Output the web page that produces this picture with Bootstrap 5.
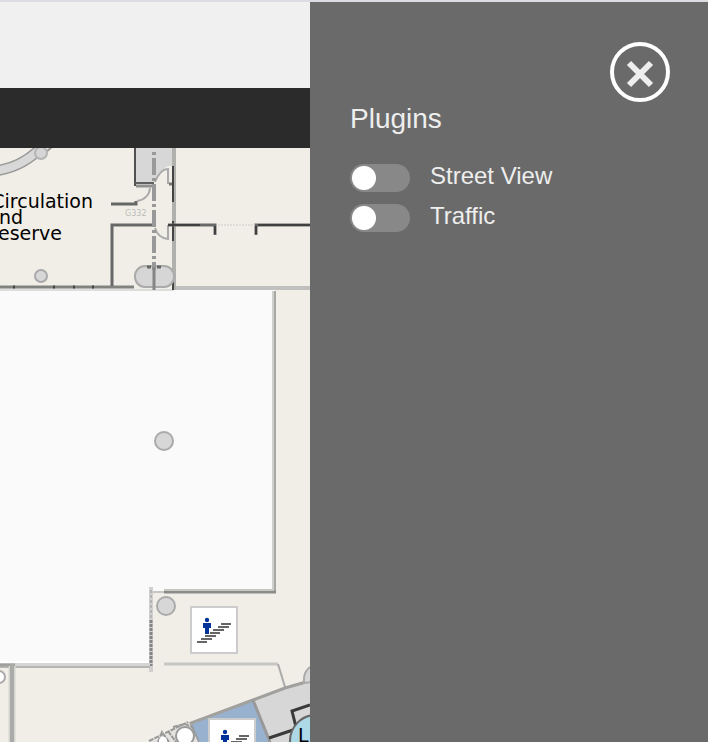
<!DOCTYPE html>
<html lang="en">
<head>
<meta charset="utf-8">
<meta name="viewport" content="width=device-width, initial-scale=1">
<title>Floor plan – Plugins</title>
<link href="https://cdn.jsdelivr.net/npm/bootstrap@5.3.0/dist/css/bootstrap.min.css" rel="stylesheet">
<style>
  body { font-family: "Liberation Sans", Arial, sans-serif; border-top: 2px solid #dcdce2; background: #f0f0f0; }
  .top-strip { height: 86px; background: #f0f0f0; }
  .tool-strip { height: 60px; background: #2b2b2b; }
  .floor-map { background: #f1eee7; min-height: 0; }
  .floor-map svg { font-family: "DejaVu Sans", Verdana, sans-serif; }
  .plugin-panel { width: 398px; padding: 40px 38px 40px 40px; background: #6a6a6a; color: #eee; }
  .close-round { width: 60px; height: 60px; border: 4px solid #fff; background: transparent; color: #eee; }
  .panel-title { font-size: 28px; line-height: 34px; font-weight: 400; margin-bottom: 22px; }
  .plugin-row { height: 40px; gap: 20px; padding: 0; }
  .plugin-row .form-check-input {
    width: 60px; height: 28px; margin: 6px 0 0; float: none; border: 0;
    background-color: #888; background-size: 28px 28px; background-position: left center;
    background-image: radial-gradient(circle at 14px 14px, #fff 11.5px, transparent 12.5px);
    background-repeat: no-repeat;
  }
  .plugin-row .form-check-input:checked { background-color: #4a90d9; background-position: right center; }
  .plugin-row label { font-size: 24px; line-height: 36px; }
</style>
<script src="https://cdn.jsdelivr.net/npm/bootstrap@5.3.0/dist/js/bootstrap.bundle.min.js"></script>
</head>
<body class="d-flex vh-100 overflow-hidden">
<div class="d-flex flex-column flex-fill overflow-hidden">
  <header class="top-strip flex-shrink-0"></header>
  <nav class="tool-strip flex-shrink-0" aria-label="Map tools"></nav>
  <main class="floor-map flex-fill overflow-hidden">
    <svg class="d-block" width="100%" height="100%" role="img" aria-label="Floor plan">
      <defs>
        <g id="stairs">
          <rect x="1" y="1" width="46" height="46" fill="#fff" stroke="#ccc" stroke-width="2"/>
          <circle cx="17" cy="14" r="2.2" fill="#003399"/>
          <path d="M7 36h10M11 33h11M15 30h11M20 27h10M23 24h11M28 21h11M31 18h10" stroke="#666" stroke-width="2"/>
          <path d="M13 17h8v5h-2v6h-4v-6h-2z" fill="#003399"/>
        </g>
      </defs>
      <g transform="translate(0 -148)" fill="none">
        <!-- large hall -->
        <path d="M0 290H275V592H152V665H0Z" fill="#fafafa"/>
        <path d="M0 662H150" stroke="#fff" stroke-width="2"/>
        <path d="M172 288H310" stroke="#c0c0be" stroke-width="4"/>
        <path d="M0 287H134" stroke="#80837e" stroke-width="3"/>
        <path d="M13 287h2M53 287h2M73 287h2M92 287h2" stroke="#444" stroke-width="3"/>
        <path d="M0 290H174" stroke="#ddd" stroke-width="2"/>
        <path d="M274 291V592" stroke="#cfcfcb" stroke-width="4"/>
        <path d="M275 291V592" stroke="#a8a8a6" stroke-width="2"/>
        <path d="M164 592H276" stroke="#8b8b88" stroke-width="3"/>
        <path d="M164 590H274M150 592H164" stroke="#c6c6c2" stroke-width="2"/>
        <path d="M151 587V672" stroke="#d0d0ce" stroke-width="4"/>
        <path d="M151 590V620" stroke="#b4b4b4" stroke-width="2" stroke-dasharray="3 2"/>
        <path d="M151 620V666" stroke="#858585" stroke-width="3" stroke-dasharray="3 1"/>
        <path d="M0 665H150" stroke="#d5d5d5" stroke-width="4"/>
        <path d="M0 667H150" stroke="#b6b6b3" stroke-width="2"/>
        <path d="M0 665H15" stroke="#a0a09e" stroke-width="3"/>
        <path d="M12 666V742" stroke="#d5d5d0" stroke-width="7"/>
        <path d="M12 664V742" stroke="#aaaba9" stroke-width="4"/>
        <circle cx="-1" cy="677" r="6" fill="#fff" stroke="#aaa" stroke-width="2"/>
        <!-- curved wall -->
        <path d="M-6 171Q22 168 43 146" stroke="#999" stroke-width="11"/>
        <path d="M-6 171Q22 168 43 146" stroke="#d8d8d8" stroke-width="8"/>
        <path d="M46 152L52 147" stroke="#999" stroke-width="2"/>
        <circle cx="41" cy="153" r="6" fill="#d5d5d5" stroke="#b4b4b4" stroke-width="2"/>
        <!-- shaft and doors -->
        <path d="M136 148H174V166H168Q159 170 154 181V183H136Z" fill="#d7d7d7"/>
        <path d="M135 148V186" stroke="#505050" stroke-width="2"/>
        <path d="M135 183H154" stroke="#606060" stroke-width="2"/>
        <path d="M136 186H152" stroke="#909090" stroke-width="3"/>
        <path d="M169 184h4" stroke="#777" stroke-width="3"/>
        <path d="M174 148V290" stroke="#b0b0ad" stroke-width="4"/>
        <path d="M173 166V202M173 221V241M173 282V290" stroke="#444" stroke-width="2"/>
        <path d="M111 204H136V201" stroke="#666" stroke-width="3"/>
        <path d="M137 201Q149 199 150 188M155 182Q160 169 168 169V184M155 228Q158 238 168 239V225" stroke="#aaa" stroke-width="2"/>
        <path d="M112 286V225H154" stroke="#686868" stroke-width="3"/>
        <path d="M168 225H215V235M256 235V225H310" stroke="#686868" stroke-width="3"/>
        <path d="M168 225H200M215 226V234M256 234V226M258 225H310" stroke="#404040" stroke-width="2"/>
        <path d="M218 225H255" stroke="#ccc" stroke-width="1" stroke-dasharray="2 1"/>
        <rect x="135" y="266" width="39" height="21" rx="10" fill="#d6d6d6" stroke="#aaa" stroke-width="2"/>
        <path d="M147 267H161" stroke="#666" stroke-width="3" stroke-dasharray="4 1"/>
        <path d="M154 150V270" stroke="#999" stroke-width="4" stroke-dasharray="17 3 3 3" stroke-dashoffset="18"/>
        <path d="M154 267V290" stroke="#858585" stroke-width="3"/>
        <!-- columns -->
        <g fill="#d7d7d7" stroke="#aaa" stroke-width="2">
          <circle cx="41" cy="276" r="6"/>
          <circle cx="164" cy="441" r="9"/>
          <circle cx="166" cy="606" r="9"/>
        </g>
        <!-- lower rooms -->
        <path d="M164 664H278" stroke="#c6c6c2" stroke-width="3"/>
        <path d="M278 664L285 687" stroke="#aaa" stroke-width="2"/>
        <path d="M190 725L253 701L272 742H196Z" fill="#98b1cf"/>
        <path d="M254 700L310 681V742H270Z" fill="#d7d7d7"/>
        <path d="M186 725L253 700L285 688L306 682" stroke="#a0a09e" stroke-width="3"/>
        <path d="M253 700L270 742M191 725L198 742" stroke="#999" stroke-width="3"/>
        <path d="M312 666Q303 670 304 683L312 682" fill="#d7d7d7" stroke="#aaa" stroke-width="2"/>
        <path d="M310 705L292 711L296 727M269 738L293 730" stroke="#3a3a3a" stroke-width="3"/>
        <path d="M149 742L189 722L198 742Z" fill="#e4e3df"/>
        <path d="M149 741L188 722M158 742L162 732L169 742M168 731L176 742M173 727L185 724L192 727" stroke="#999" stroke-width="2" stroke-dasharray="5 1"/>
        <circle cx="185" cy="736" r="9" fill="#fff" stroke="#999" stroke-width="2"/>
        <circle cx="163" cy="741" r="4" fill="#fff"/>
        <circle cx="316" cy="741" r="26" fill="#add8e6" stroke="#666" stroke-width="2"/>
        <use href="#stairs" x="190" y="606"/>
        <use href="#stairs" x="208" y="718"/>
        <!-- room labels -->
        <g fill="#000" font-size="19">
          <text x="93" y="208" text-anchor="end">Circulation</text>
          <text x="23" y="224" text-anchor="end">and</text>
          <text x="62" y="240" text-anchor="end">reserve</text>
          <text x="298" y="742">L</text>
        </g>
        <text x="125" y="216" fill="#bbb" font-size="8">G332</text>
      </g>
    </svg>
  </main>
</div>
<aside class="plugin-panel flex-shrink-0">
  <div class="d-flex justify-content-end">
    <button type="button" class="close-round rounded-circle p-0 d-flex align-items-center justify-content-center" aria-label="Close">
      <svg width="52" height="52" viewBox="0 0 52 52" aria-hidden="true"><path d="M15 17L37 39M37 17L15 39" stroke="currentColor" stroke-width="6"/></svg>
    </button>
  </div>
  <h1 class="panel-title">Plugins</h1>
  <div class="plugin-row form-check form-switch d-flex align-items-start mb-0">
    <input class="form-check-input flex-shrink-0" type="checkbox" role="switch" id="street-view">
    <label for="street-view">Street View</label>
  </div>
  <div class="plugin-row form-check form-switch d-flex align-items-start mb-0">
    <input class="form-check-input flex-shrink-0" type="checkbox" role="switch" id="traffic">
    <label for="traffic">Traffic</label>
  </div>
</aside>
</body>
</html>
